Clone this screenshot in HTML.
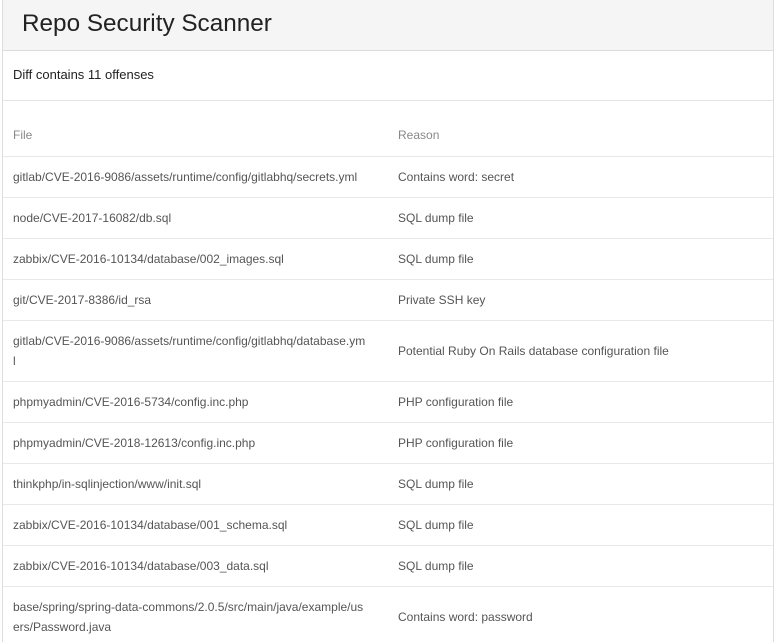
<!DOCTYPE html>
<html style="height:642px;overflow:hidden"><head><meta charset="utf-8"><style>
*{box-sizing:border-box;margin:0;padding:0}
html,body{width:779px;height:642px;overflow:hidden;}
body{background:#fff;font-family:"Liberation Sans",sans-serif;position:relative;}
.panel{position:absolute;left:2px;top:0;width:772px;height:700px;border:1px solid #ddd;border-top:none;}
.hd{height:51px;background:#f5f5f5;border-bottom:1px solid #ddd;padding-left:19px;}
.hd h1{font-weight:normal;font-size:24.3px;color:#222;line-height:47px;}
.sub{height:50px;border-bottom:1px solid #e5e5e5;padding-left:10px;font-size:13px;color:#222;line-height:48px;}
table{border-collapse:collapse;table-layout:fixed;width:770px;font-size:12px;color:#555;}
td,th{padding:10px 10px 10px 10px;line-height:20px;text-align:left;vertical-align:middle;border-top:1px solid #e8e8e8;word-break:break-all;}
th{font-weight:normal;color:#888;border-top:none;border-bottom:1px solid #e8e8e8;padding-top:24px;padding-bottom:10px;height:55px;}
tr:first-child td{border-top:none}
</style></head><body>
<div class="panel">
<div class="hd"><h1>Repo Security Scanner</h1></div>
<div class="sub">Diff contains 11 offenses</div>
<table>
<colgroup><col style="width:385px"><col></colgroup>
<thead><tr><th>File</th><th>Reason</th></tr></thead>
<tbody>
<tr><td>gitlab/CVE-2016-9086/assets/runtime/config/gitlabhq/secrets.yml</td><td>Contains word: secret</td></tr>
<tr><td>node/CVE-2017-16082/db.sql</td><td>SQL dump file</td></tr>
<tr><td>zabbix/CVE-2016-10134/database/002_images.sql</td><td>SQL dump file</td></tr>
<tr><td>git/CVE-2017-8386/id_rsa</td><td>Private SSH key</td></tr>
<tr><td>gitlab/CVE-2016-9086/assets/runtime/config/gitlabhq/database.ym<br>l</td><td>Potential Ruby On Rails database configuration file</td></tr>
<tr><td>phpmyadmin/CVE-2016-5734/config.inc.php</td><td>PHP configuration file</td></tr>
<tr><td>phpmyadmin/CVE-2018-12613/config.inc.php</td><td>PHP configuration file</td></tr>
<tr><td>thinkphp/in-sqlinjection/www/init.sql</td><td>SQL dump file</td></tr>
<tr><td>zabbix/CVE-2016-10134/database/001_schema.sql</td><td>SQL dump file</td></tr>
<tr><td>zabbix/CVE-2016-10134/database/003_data.sql</td><td>SQL dump file</td></tr>
<tr><td>base/spring/spring-data-commons/2.0.5/src/main/java/example/us<br>ers/Password.java</td><td>Contains word: password</td></tr>
</tbody></table>
</div>
</body></html>
